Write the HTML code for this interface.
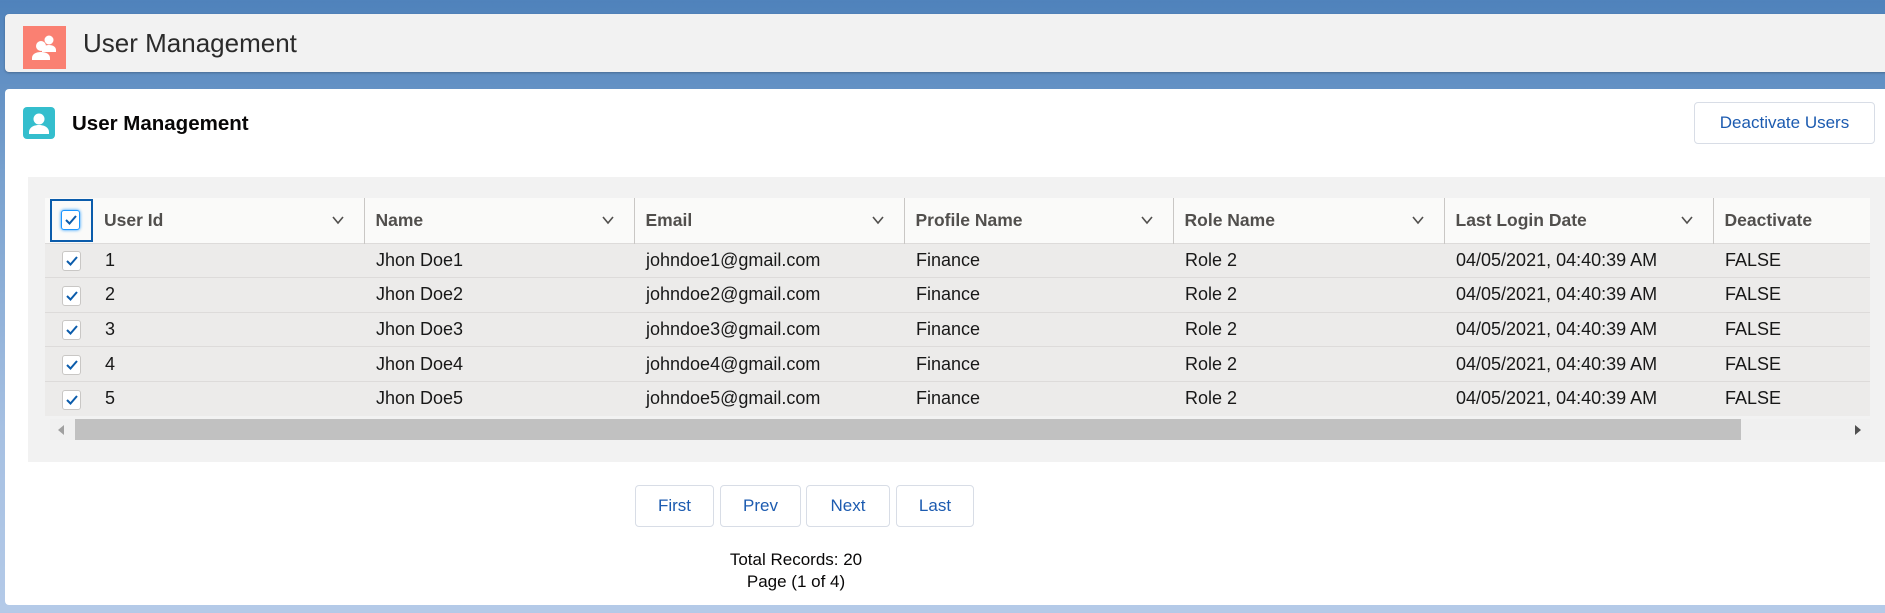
<!DOCTYPE html>
<html><head><meta charset="utf-8">
<style>
*{box-sizing:border-box;margin:0;padding:0}
body{width:1885px;height:613px;overflow:hidden;position:relative;font-family:"Liberation Sans",sans-serif;background:linear-gradient(180deg,#4f82bb 0%,#7aa2cf 30%,#a6c0e2 70%,#b4cae8 100%);}
.hdr{position:absolute;left:5px;top:14px;width:1890px;height:58px;background:#f2f2f2;border-radius:4px;box-shadow:0 1px 2px rgba(0,0,0,.25)}
.hicon{position:absolute;left:18px;top:12px;width:43px;height:43px;background:#fa8072}
.htitle{position:absolute;left:78px;top:12px;font-size:26px;color:#2b2b2b;line-height:34px;font-weight:300}
.panel{position:absolute;left:5px;top:89px;width:1890px;height:516px;background:#fff;border-radius:4px}
.cicon{position:absolute;left:18px;top:18px;width:32px;height:32px;background:#34becd;border-radius:4px}
.ctitle{position:absolute;left:67px;top:22px;font-size:20.5px;font-weight:bold;color:#080707;line-height:26px}
.btn{position:absolute;border:1px solid #d8dde6;border-radius:4px;background:#fff;font-size:17px;text-align:center;color:#1c5bb0}
.gray{position:absolute;left:23px;top:88px;width:1870px;height:285px;background:#f2f2f2}
table{position:absolute;left:45px;top:198px;border-collapse:collapse;font-size:18px;color:#181818;table-layout:fixed}
th{height:45px;background:#fafaf9;text-align:left;font-weight:bold;color:#514f4d;padding-left:11px;position:relative;border-left:1px solid #c9c7c5;font-size:17.5px}
th:first-child,th:nth-child(2){border-left:none}
th .chev{position:absolute;right:20px;top:16px;width:12px;height:12px}
td{height:34.6px;background:#ecebea;border-top:1px solid #dddbda;padding-left:12px;white-space:nowrap;overflow:hidden}
.cb{display:inline-block;width:19px;height:20px;border:1px solid #c9c7c5;border-radius:3px;background:#fff;vertical-align:middle;position:relative}
.cb svg{position:absolute;left:3px;top:4px}
.sb{position:absolute;left:50px;top:419px;width:1820px;height:21px;background:#f0f0f0}
.thumb{position:absolute;left:25px;top:0;width:1666px;height:21px;background:#c1c1c1}
.foot{position:absolute;left:0;width:1592px;text-align:center;font-size:17px;color:#080707}
</style></head><body>
<div class="hdr">
 <div class="hicon"><svg width="43" height="43" viewBox="0 0 43 43"><g fill="#fff"><circle cx="26" cy="14" r="4.5"/><path d="M19 24c0-3 3-5 7-5s7 2 7 5v2H19z"/><circle cx="18" cy="20" r="5"/><path d="M9 32c0-4 4-6 9-6s9 2 9 6v2H9z"/></g></svg></div>
 <div class="htitle">User Management</div>
</div>
<div class="panel">
 <div class="cicon"><svg width="32" height="32" viewBox="0 0 32 32"><g fill="#fff"><circle cx="16" cy="12" r="5.5"/><path d="M6 25c0-4 4-7 10-7s10 3 10 7v2H6z"/></g></svg></div>
 <div class="ctitle">User Management</div>
 <div class="btn" style="left:1689px;top:13px;width:181px;height:42px;line-height:40px">Deactivate Users</div>
 <div class="gray"></div>
</div>
<table>
<colgroup><col style="width:48px"><col style="width:271px"><col style="width:270px"><col style="width:270px"><col style="width:269px"><col style="width:271px"><col style="width:269px"><col style="width:157px"></colgroup>
<tr><th style="padding:0"><div style="margin-left:5px;width:43px;height:43px;border:2px solid #0b5cab;position:relative"><span class="cb" style="position:absolute;left:9px;top:9px;border-color:#1b96ff;box-shadow:0 0 3px #1b96ff"><svg width="12" height="10" viewBox="0 0 12 10"><path d="M1 5l3.5 3.5L11 1" fill="none" stroke="#0b5cab" stroke-width="2"/></svg></span></div></th>
<th>User Id<svg class="chev" viewBox="0 0 12 12"><path d="M1 3l5 6 5-6" fill="none" stroke="#514f4d" stroke-width="1.6"/></svg></th>
<th>Name<svg class="chev" viewBox="0 0 12 12"><path d="M1 3l5 6 5-6" fill="none" stroke="#514f4d" stroke-width="1.6"/></svg></th>
<th>Email<svg class="chev" viewBox="0 0 12 12"><path d="M1 3l5 6 5-6" fill="none" stroke="#514f4d" stroke-width="1.6"/></svg></th>
<th>Profile Name<svg class="chev" viewBox="0 0 12 12"><path d="M1 3l5 6 5-6" fill="none" stroke="#514f4d" stroke-width="1.6"/></svg></th>
<th>Role Name<svg class="chev" viewBox="0 0 12 12"><path d="M1 3l5 6 5-6" fill="none" stroke="#514f4d" stroke-width="1.6"/></svg></th>
<th>Last Login Date<svg class="chev" viewBox="0 0 12 12"><path d="M1 3l5 6 5-6" fill="none" stroke="#514f4d" stroke-width="1.6"/></svg></th>
<th>Deactivate</th></tr>
<tr><td style="padding-left:17px"><span class="cb"><svg width="12" height="10" viewBox="0 0 12 10"><path d="M1 5l3.5 3.5L11 1" fill="none" stroke="#0b5cab" stroke-width="2"/></svg></span></td><td>1</td><td>Jhon Doe1</td><td>johndoe1@gmail.com</td><td>Finance</td><td>Role 2</td><td>04/05/2021, 04:40:39 AM</td><td>FALSE</td></tr>
<tr><td style="padding-left:17px"><span class="cb"><svg width="12" height="10" viewBox="0 0 12 10"><path d="M1 5l3.5 3.5L11 1" fill="none" stroke="#0b5cab" stroke-width="2"/></svg></span></td><td>2</td><td>Jhon Doe2</td><td>johndoe2@gmail.com</td><td>Finance</td><td>Role 2</td><td>04/05/2021, 04:40:39 AM</td><td>FALSE</td></tr>
<tr><td style="padding-left:17px"><span class="cb"><svg width="12" height="10" viewBox="0 0 12 10"><path d="M1 5l3.5 3.5L11 1" fill="none" stroke="#0b5cab" stroke-width="2"/></svg></span></td><td>3</td><td>Jhon Doe3</td><td>johndoe3@gmail.com</td><td>Finance</td><td>Role 2</td><td>04/05/2021, 04:40:39 AM</td><td>FALSE</td></tr>
<tr><td style="padding-left:17px"><span class="cb"><svg width="12" height="10" viewBox="0 0 12 10"><path d="M1 5l3.5 3.5L11 1" fill="none" stroke="#0b5cab" stroke-width="2"/></svg></span></td><td>4</td><td>Jhon Doe4</td><td>johndoe4@gmail.com</td><td>Finance</td><td>Role 2</td><td>04/05/2021, 04:40:39 AM</td><td>FALSE</td></tr>
<tr><td style="padding-left:17px"><span class="cb"><svg width="12" height="10" viewBox="0 0 12 10"><path d="M1 5l3.5 3.5L11 1" fill="none" stroke="#0b5cab" stroke-width="2"/></svg></span></td><td>5</td><td>Jhon Doe5</td><td>johndoe5@gmail.com</td><td>Finance</td><td>Role 2</td><td>04/05/2021, 04:40:39 AM</td><td>FALSE</td></tr>
</table>
<div class="sb"><svg style="position:absolute;left:8px;top:6px" width="6" height="10"><path d="M6 0v10L0 5z" fill="#a0a0a0"/></svg><div class="thumb"></div><svg style="position:absolute;left:1805px;top:6px" width="6" height="10"><path d="M0 0v10l6-5z" fill="#505050"/></svg></div>
<div class="btn" style="left:635px;top:485px;width:79px;height:42px;line-height:40px">First</div>
<div class="btn" style="left:720px;top:485px;width:81px;height:42px;line-height:40px">Prev</div>
<div class="btn" style="left:806px;top:485px;width:84px;height:42px;line-height:40px">Next</div>
<div class="btn" style="left:896px;top:485px;width:78px;height:42px;line-height:40px">Last</div>
<div class="foot" style="top:550px">Total Records: 20</div>
<div class="foot" style="top:572px">Page (1 of 4)</div>
</body></html>
